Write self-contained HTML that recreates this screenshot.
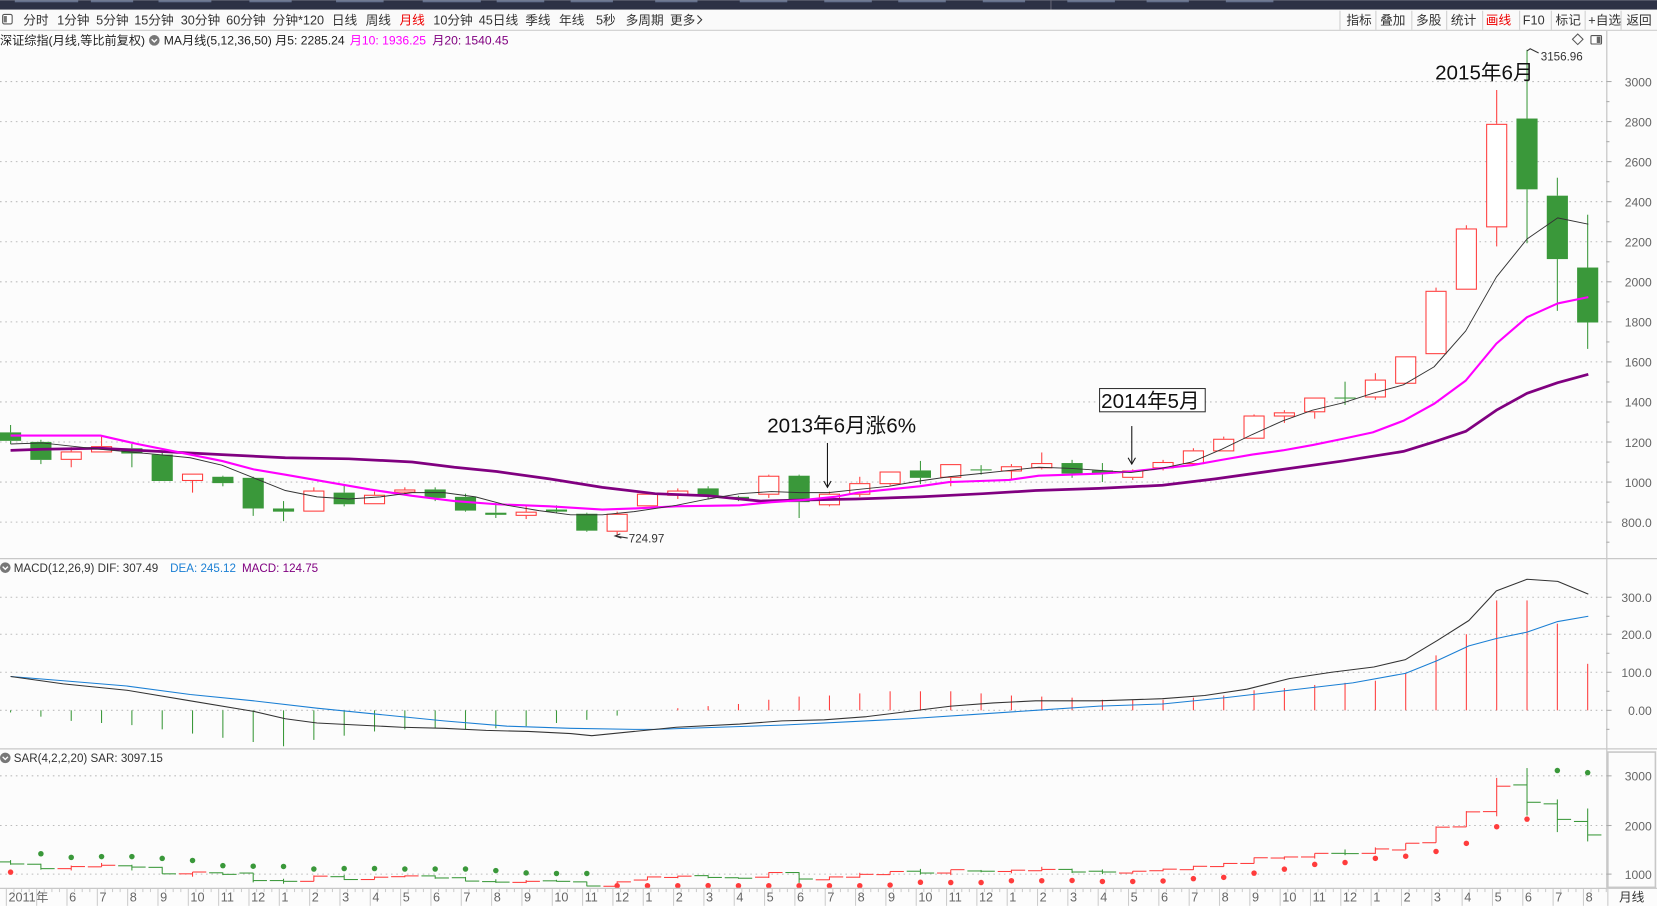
<!DOCTYPE html>
<html><head><meta charset="utf-8">
<style>
html,body{margin:0;padding:0;background:#fcfcfc;overflow:hidden;width:1657px;height:906px}
svg{display:block}
text{font-family:"Liberation Sans","Noto Sans CJK SC",sans-serif}
</style></head>
<body>
<svg id="s" width="1657" height="906" viewBox="0 0 1568 857" xmlns="http://www.w3.org/2000/svg">
<rect x="0" y="0" width="1568" height="857" fill="#fcfcfc"/>
<rect x="0" y="0" width="1568" height="9" fill="#2c3145"/>
<g fill="#8899bb" opacity="0.6">
<rect x="14" y="0" width="60" height="2"/><rect x="86" y="0" width="40" height="2"/><rect x="150" y="0" width="50" height="2"/><rect x="236" y="0" width="40" height="2"/><rect x="318" y="0" width="45" height="2"/><rect x="400" y="0" width="55" height="2"/><rect x="470" y="0" width="45" height="2"/><rect x="540" y="0" width="40" height="2"/><rect x="620" y="0" width="40" height="2"/><rect x="700" y="0" width="45" height="2"/><rect x="780" y="0" width="45" height="2"/><rect x="850" y="0" width="45" height="2"/><rect x="930" y="0" width="40" height="2"/><rect x="1010" y="0" width="45" height="2"/><rect x="1085" y="0" width="40" height="2"/><rect x="1160" y="0" width="45" height="2"/>
</g>
<rect x="994" y="0" width="1" height="9" fill="#667"/>
<rect x="0" y="9" width="1568" height="20" fill="#fafafa"/>
<line x1="0" y1="28.5" x2="1568" y2="28.5" stroke="#cfcfcf"/>
<rect x="2.5" y="13.5" width="9" height="9" rx="1.5" fill="#fff" stroke="#555"/><rect x="3.5" y="15" width="3" height="6" fill="#777"/>
<g font-size="12" fill="#333">
<text x="22" y="23">分时</text><text x="54" y="23">1分钟</text><text x="91" y="23">5分钟</text><text x="127" y="23">15分钟</text><text x="171" y="23">30分钟</text><text x="214" y="23">60分钟</text><text x="258" y="23">分钟*120</text><text x="314" y="23">日线</text><text x="346" y="23">周线</text><text x="378" y="23" fill="#e00">月线</text><text x="410" y="23">10分钟</text><text x="453" y="23">45日线</text><text x="497" y="23">季线</text><text x="529" y="23">年线</text><text x="564" y="23">5秒</text><text x="592" y="23">多周期</text><text x="634" y="23">更多</text>
<path d="M660 14.5 L664 18.5 L660 22.5" fill="none" stroke="#333"/>
<text x="1274" y="23">指标</text><text x="1306" y="23">叠加</text><text x="1340" y="23">多股</text><text x="1373" y="23">统计</text><text x="1406" y="23" fill="#e00">画线</text><text x="1441" y="23">F10</text><text x="1472" y="23">标记</text><text x="1503" y="23">+自选</text><text x="1539" y="23">返回</text>
</g>
<g stroke="#cfcfcf"><line x1="1268" y1="10" x2="1268" y2="28"/><line x1="1302" y1="10" x2="1302" y2="28"/><line x1="1336" y1="10" x2="1336" y2="28"/><line x1="1369" y1="10" x2="1369" y2="28"/><line x1="1403" y1="10" x2="1403" y2="28"/><line x1="1438" y1="10" x2="1438" y2="28"/><line x1="1468" y1="10" x2="1468" y2="28"/><line x1="1500" y1="10" x2="1500" y2="28"/><line x1="1534" y1="10" x2="1534" y2="28"/></g>
<g font-size="11.5">
<text x="0" y="42" fill="#222">深证综指(月线,等比前复权)</text>
<circle cx="146" cy="38" r="5" fill="#777"/><path d="M143.5 37 L146 39.5 L148.5 37" fill="none" stroke="#fff" stroke-width="1.3"/>
<text x="155" y="42" fill="#222">MA月线(5,12,36,50)  月5: 2285.24</text>
<text x="331" y="42" fill="#f0f">月10: 1936.25</text>
<text x="409" y="42" fill="#800080">月20: 1540.45</text>
</g>
<path d="M1488 37 L1493 32 L1498 37 L1493 42 Z" fill="none" stroke="#555"/>
<rect x="1505.5" y="33.5" width="10" height="8" rx="1" fill="#fff" stroke="#555"/><rect x="1511" y="34.5" width="3.5" height="6" fill="#666"/>
<g id="g"></g>
</svg>
<script>
var g=document.getElementById('g'),h='';
function L(x1,y1,x2,y2,c,w,extra){h+='<line x1="'+x1+'" y1="'+y1+'" x2="'+x2+'" y2="'+y2+'" stroke="'+c+'" stroke-width="'+(w||1)+'" '+(extra||'')+'/>';}
function T(x,y,t,c,s,a){h+='<text x="'+x+'" y="'+y+'" fill="'+c+'" font-size="'+s+'"'+(a?' text-anchor="'+a+'"':'')+'>'+t+'</text>';}
function P(pts,c,w){h+='<polyline fill="none" stroke="'+c+'" stroke-width="'+w+'" stroke-linejoin="round" points="'+pts.map(function(p){return p.join(',')}).join(' ')+'"/>';}
var AX=1520;
L(0,528.5,1568,528.5,'#c8c8c8',1.2);L(0,708.5,1568,708.5,'#c8c8c8',1.2);
L(AX+.5,29,AX+.5,840,'#c8c8c8',1.2);
var labs=['3000','2800','2600','2400','2200','2000','1800','1600','1400','1200','1000','800.0'];
for(var k=0;k<12;k++){var y=77+k*37.9;L(0,y,AX,y,'#bbb',1,'stroke-dasharray="1.5,3.5"');T(1563,y+4.5,labs[k],'#666',11.5,'end');L(AX,y,AX+5,y,'#aaa');L(AX,y+19,AX+3,y+19,'#aaa');}
var ml=[[565,'300.0'],[600,'200.0'],[636,'100.0'],[672,'0.00']];
ml.forEach(function(m){L(0,m[0],AX,m[0],'#bbb',1,'stroke-dasharray="1.5,3.5"');T(1563,m[0]+4.5,m[1],'#666',11.5,'end');L(AX,m[0],AX+5,m[0],'#aaa');L(AX,m[0]+18,AX+3,m[0]+18,'#aaa');});
h+='<rect x="1521.5" y="711.5" width="45" height="128" fill="none" stroke="#c8c8c8" stroke-width="1.5"/>';
[[734,'3000'],[781,'2000'],[827,'1000']].forEach(function(m){L(0,m[0],AX,m[0],'#bbb',1,'stroke-dasharray="1.5,3.5"');T(1563,m[0]+4.5,m[1],'#666',11.5,'end');L(AX,m[0],AX+5,m[0],'#aaa');});
var C=[[409,417,402,420,'g'],[418,435,416,439,'g'],[427,435,423,442,'r'],[422,428,413,428,'r'],[424,429,420,442,'g'],[430,455,428,455,'g'],[448,455,448,466,'r'],[451,457,450,460,'g'],[452,481,451,488,'g'],[481,484,474,493,'g'],[464,484,461,484,'r'],[466,477,459,479,'g'],[468,477,465,477,'r'],[463,466,461,468,'r'],[463,471,461,474,'g'],[470,483,467,484,'g'],[485,487,476,490,'g'],[484,488,479,491,'r'],[482,484,478,485,'g'],[486,502,485,503,'g'],[486,503,484,506,'r'],[467,479,465,479,'r'],[464,469,462,472,'r'],[462,469,460,472,'g'],[470,472,469,474,'g'],[450,468,449,471,'r'],[450,475,449,490,'g'],[467,478,465,479,'r'],[457,468,451,470,'r'],[446,458,446,459,'r'],[445,452,436,458,'g'],[439,452,439,460,'r'],[444,445,440,449,'g'],[441,446,439,453,'r'],[438,443,428,444,'r'],[438,448,435,452,'g'],[445,448,438,456,'g'],[445,452,444,454,'r'],[437,443,435,445,'r'],[426,439,424,440,'r'],[415,427,413,427,'r'],[393,415,392,415,'r'],[390,394,388,400,'r'],[376,390,376,396,'r'],[376,377,361,383,'g'],[359,376,353,378,'r'],[337,363,337,363,'r'],[275,335,272,335,'r'],[216,274,213,274,'r'],[117,215,85,233,'r'],[112,179,47,230,'g'],[185,245,168,294,'g'],[253,305,203,330,'g']];
function X(i){return 10+i*28.7;}
var RED='#ff3c3c',GR='#3a983a';
C.forEach(function(c,i){var x=X(i);var col=c[4]=='g'?GR:RED;
 L(x,c[2],x,c[0],col);L(x,c[1],x,c[3],col);
 var hh=Math.max(c[1]-c[0],1);
 if(c[4]=='g')h+='<rect x="'+(x-10)+'" y="'+c[0]+'" width="20" height="'+hh+'" fill="'+GR+'"/>';
 else h+='<rect x="'+(x-9.5)+'" y="'+(c[0]+.5)+'" width="19" height="'+Math.max(hh-1,0.5)+'" fill="#fff" stroke="'+RED+'"/>';
});
P([[10,426],[40,425],[95,424],[150,427],[210,430],[270,433],[330,434],[390,437],[430,442],[470,446],[520,453],[570,461],[620,467],[670,469],[720,474],[760,473],[810,472],[870,470],[930,467],[980,464],[1040,462],[1100,459],[1150,453],[1214,444],[1271,436],[1328,427],[1357,418],[1387,408],[1416,388],[1445,372],[1474,362],[1503,354]],'#800080',2.6);
P([[10,412],[95,412],[130,420],[170,428],[210,436],[240,444],[270,449],[310,456],[350,463],[390,469],[430,474],[470,477],[520,479],[570,482],[600,481],[640,479],[700,478],[730,475],[760,473],[790,470],[812,466],[841,463],[870,460],[898,456],[927,455],[955,454],[983,450],[1012,449],[1042,448],[1070,446],[1099,443],[1128,440],[1156,435],[1185,430],[1214,426],[1242,421],[1271,415],[1299,409],[1328,398],[1357,382],[1387,360],[1416,325],[1445,300],[1474,287],[1503,281]],'#ff00ff',2);
P([[10,420],[40,419],[95,425],[150,430],[180,433],[210,440],[240,452],[270,464],[300,470],[330,472],[360,470],[390,466],[420,466],[450,470],[480,478],[510,483],[540,487],[570,487],[600,484],[640,478],[670,472],[700,467],[730,465],[757,466],[784,466],[812,463],[841,460],[870,455],[898,451],[927,448],[955,445],[983,442],[1012,443],[1042,445],[1070,447],[1099,443],[1128,437],[1156,425],[1185,411],[1214,398],[1242,388],[1271,381],[1299,372],[1328,364],[1357,347],[1387,313],[1416,262],[1445,226],[1474,206],[1503,212]],'#333',0.9);
T(1358,75,'2015年6月','#111',19.5);
T(726,409,'2013年6月涨6%','#111',19.5);
L(783,419,783,461,'#111');h+='<path d="M779.5 455 L783 461 L786.5 455" fill="none" stroke="#111"/>';
h+='<rect x="1040.5" y="367.5" width="100" height="22" fill="#fff" stroke="#333"/>';T(1042,386,'2014年5月','#111',19.5);
L(1071,403,1071,439,'#111');h+='<path d="M1067.5 433 L1071 439 L1074.5 433" fill="none" stroke="#111"/>';
h+='<path d="M1445 48 L1448 46 L1456 50" fill="none" stroke="#333"/>';T(1458,57,'3156.96','#333',11);
h+='<path d="M587 505 L582 507 L588 509 M582 507 L594 509" fill="none" stroke="#333"/>';T(595,513,'724.97','#333',11);
T(13,541,'MACD(12,26,9)  DIF: 307.49','#333',11);T(161,541,'DEA: 245.12','#1a7fd4',11);T(229,541,'MACD: 124.75','#800080',11);
h+='<circle cx="5" cy="537" r="5" fill="#777"/><path d="M2.5 536 L5 538.5 L7.5 536" fill="none" stroke="#fff" stroke-width="1.3"/>';
var MH=[2,6,10,12,14,18,22,26,30,34,28,24,20,18,17,18,17,15,12,9,5,0,-2,-4,-6,-10,-13,-14,-16,-18,-18,-18,-16,-14,-13,-12,-10,-10,-10,-12,-14,-19,-21,-24,-26,-28,-35,-52,-72,-104,-104,-82,-44];
MH.forEach(function(v,i){var x=X(i);if(v>0)L(x,672,x,672+v,GR);else if(v<0)L(x,672,x,672+v,RED);});
P([[10,640],[60,644],[120,649],[180,657],[240,663],[300,670],[360,676],[420,682],[480,687],[540,689],[600,690],[620,690],[680,688],[740,686],[800,683],[860,680],[920,676],[980,672],[1040,668],[1100,666],[1160,660],[1220,653],[1280,646],[1330,637],[1360,625],[1390,611],[1416,604],[1445,598],[1474,588],[1503,583]],'#1a7fd4',1);
P([[10,640],[60,647],[120,653],[180,663],[240,673],[270,680],[300,684],[340,686],[380,688],[420,689],[460,691],[500,692],[540,694],[560,696],[600,692],[640,688],[700,685],[740,682],[780,681],[820,678],[860,673],[900,668],[940,665],[980,663],[1040,663],[1100,661],[1140,658],[1180,652],[1220,642],[1260,636],[1300,631],[1330,624],[1360,606],[1390,587],[1416,559],[1445,548],[1474,550],[1503,562]],'#333',1);
T(13,721,'SAR(4,2,2,20)  SAR: 3097.15','#333',11);
h+='<circle cx="5" cy="717" r="5" fill="#777"/><path d="M2.5 716 L5 718.5 L7.5 716" fill="none" stroke="#fff" stroke-width="1.3"/>';
function SY(y){return 734+(y-77)*0.2453;}
C.forEach(function(c,i){var x=X(i),col=c[4]=='g'?GR:RED;var o=c[4]=='g'?c[0]:c[1],cl=c[4]=='g'?c[1]:c[0];
 L(x,SY(c[2]),x,SY(c[3]),col);L(x-13,SY(o),x,SY(o),col);L(x,SY(cl),x+13,SY(cl),col);
 var up=(i==0||(i>=20&&i<=50));var y;
 if(up){var m=Math.max(C[Math.max(i-1,0)][3],c[3]);y=Math.min(SY(m)+7-(i>40?(i-40)*0.8:0),838);col=RED;}
 else{var m2=Math.min(c[2],C[Math.max(i-1,0)][2]);y=SY(m2)-6;col=GR;}
 if(i==51)y=729;if(i==52)y=731;if(i==50)y=775;
 h+='<circle cx="'+x+'" cy="'+y+'" r="2.6" fill="'+col+'"/>';
});
L(0,840.5,1568,840.5,'#c8c8c8',1.2);
for(var i=0;i<53;i++){var x=X(i)-4;L(x,841,x,857,'#ccc');
 for(var j=1;j<4;j++)L(x+j*7.2,841,x+j*7.2,844,'#ccc');
 var mo=(3+i)%12+1;
 if(i==0)T(8,853,'2011年','#666',12);else if(i>1)T(x+2,853,mo,'#666',12);}
h+='<rect x="1521" y="841" width="47" height="16" fill="#fcfcfc"/>';L(1521.5,841,1521.5,857,'#c8c8c8');
T(1532,853,'月线','#333',12);
g.innerHTML=h;
</script>
</body></html>
